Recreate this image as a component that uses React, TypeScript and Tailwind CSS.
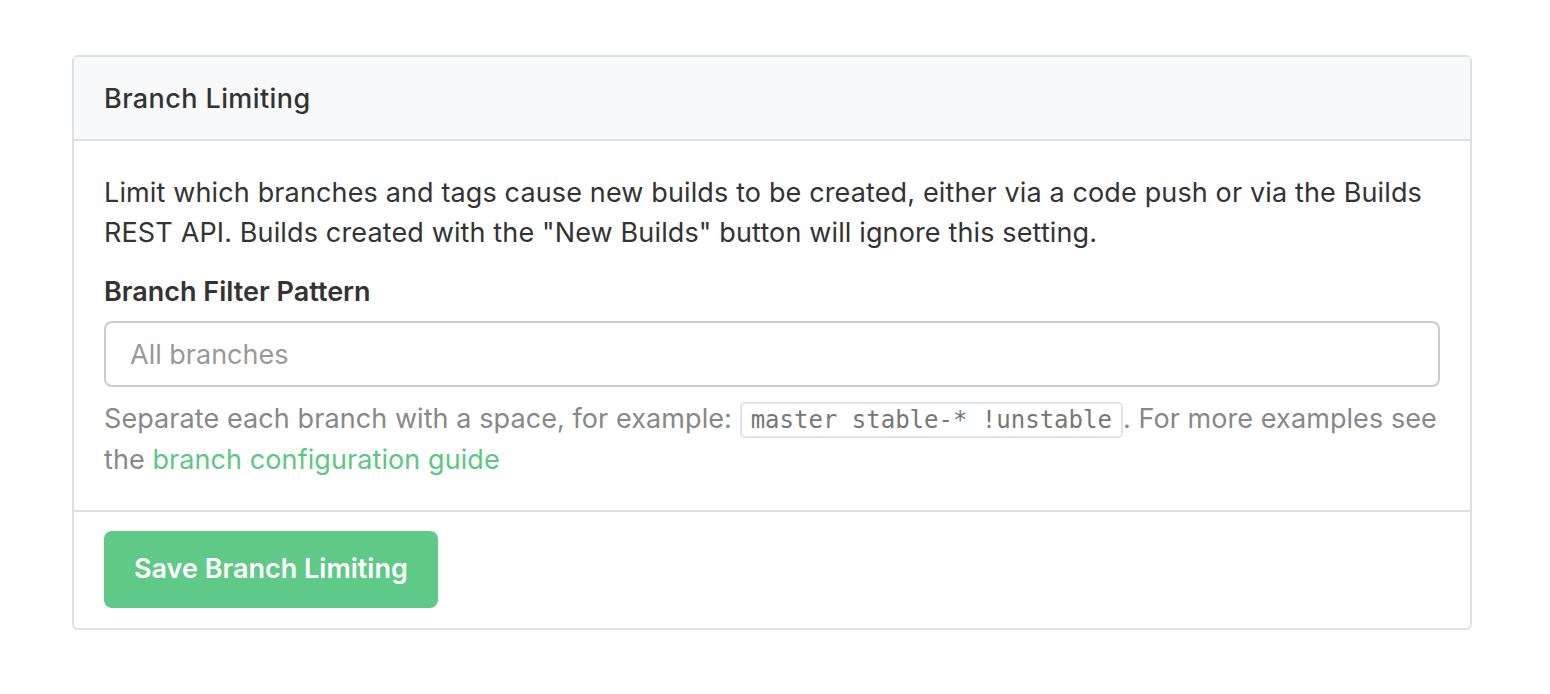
export default function App() {
  return (
    <div className="min-h-screen bg-white pt-[55px] pl-[72px]" style={{ fontFamily: "Inter, 'Noto Sans', sans-serif" }}>
      <div className="w-[1400px] rounded-[6px] border-2 border-[#dedfe0] text-[#333333]">
        <div className="flex h-[84px] items-center border-b-2 border-[#dedfe0] bg-[#f8f9fa] px-[30px] pt-[3px] text-[27px] font-medium tracking-[0.015em]">
          Branch Limiting
        </div>
        <div className="px-[30px] pt-[32px] pb-[30px]">
          <p className="text-[27px] leading-[40px] tracking-[0.005em]">
            Limit which branches and tags cause new builds to be created, either via a code push or via the Builds REST API. Builds created with the "New Builds" button will ignore this setting.
          </p>
          <label className="mt-[19px] block text-[27px] font-semibold leading-[40px]">Branch Filter Pattern</label>
          <input
            type="text"
            placeholder="All branches"
            className="mt-[9px] block h-[66px] w-full rounded-[8px] border-2 border-[#cccccc] px-[24px] text-[27px] placeholder:text-[#999999] outline-none"
          />
          <p className="mt-[12px] text-[27px] leading-[40px] tracking-[0.003em] text-[#888888]">
            Separate each branch with a space, for example:{" "}
            <code
              className="rounded-[5px] border-2 border-[#e3e3e3] px-[9px] py-[2px] text-[24px] tracking-normal text-[#777777]"
              style={{ fontFamily: "'DejaVu Sans Mono', 'Liberation Mono', monospace" }}
            >
              master stable-* !unstable
            </code>
            . For more examples see the{" "}
            <a href="#" className="text-[#5cc784]">branch configuration guide</a>
          </p>
        </div>
        <div className="border-t-2 border-[#dedfe0] px-[30px] pt-[19px] pb-[20px]">
          <button className="h-[77px] rounded-[8px] bg-[#5fc988] px-[30px] text-[27px] font-semibold text-white">
            Save Branch Limiting
          </button>
        </div>
      </div>
    </div>
  );
}
